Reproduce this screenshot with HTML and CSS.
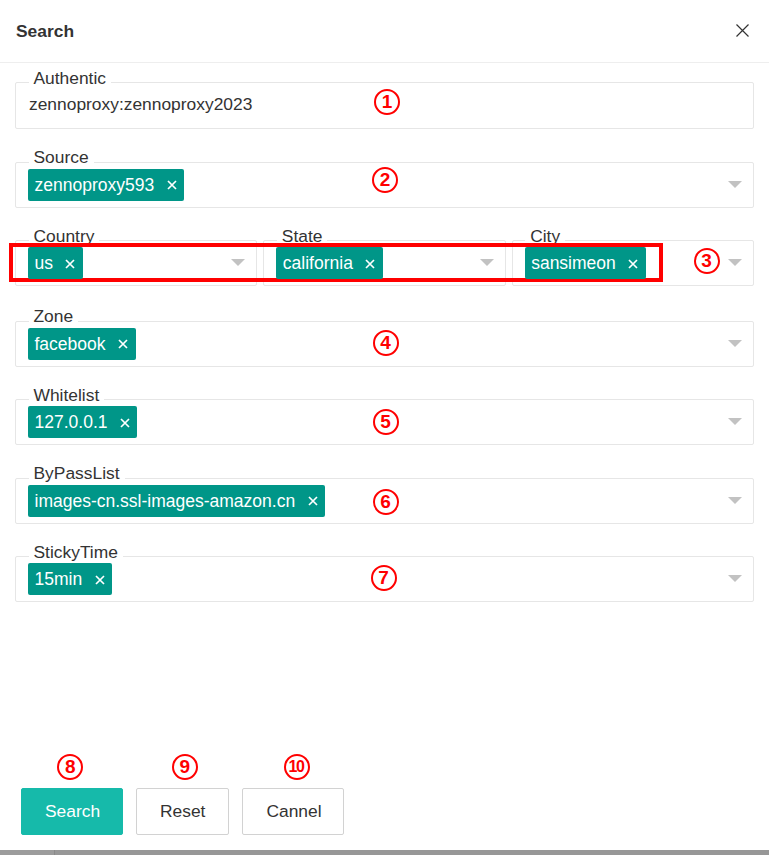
FILE: index.html
```html
<!DOCTYPE html>
<html lang="en">
<head>
<meta charset="utf-8">
<title>Search</title>
<link rel="stylesheet" href="styles.css">
</head>
<body>
<div class="dialog">
  <header class="dlg-head">
    <h2 class="dlg-title">Search</h2>
    <button class="dlg-close" type="button" aria-label="Close">
      <svg width="13" height="13" viewBox="0 0 13 13"><path d="M0.5 0.5L12.5 12.5M12.5 0.5L0.5 12.5" stroke="#333" stroke-width="1.2" fill="none"/></svg>
    </button>
  </header>

  <form class="dlg-body">
    <div class="field">
      <span class="field-label">Authentic</span>
      <div class="box box-input">zennoproxy:zennoproxy2023</div>
    </div>

    <div class="field">
      <span class="field-label">Source</span>
      <div class="box">
        <span class="tag">zennoproxy593<svg class="tag-x" viewBox="0 0 10 10"><path d="M1 1L9 9M9 1L1 9"/></svg></span>
        <i class="arrow"></i>
      </div>
    </div>

    <div class="row3">
      <div class="field">
        <span class="field-label">Country</span>
        <div class="box">
          <span class="tag">us<svg class="tag-x" viewBox="0 0 10 10"><path d="M1 1L9 9M9 1L1 9"/></svg></span>
          <i class="arrow"></i>
        </div>
      </div>
      <div class="field">
        <span class="field-label">State</span>
        <div class="box">
          <span class="tag">california<svg class="tag-x" viewBox="0 0 10 10"><path d="M1 1L9 9M9 1L1 9"/></svg></span>
          <i class="arrow"></i>
        </div>
      </div>
      <div class="field">
        <span class="field-label">City</span>
        <div class="box">
          <span class="tag">sansimeon<svg class="tag-x" viewBox="0 0 10 10"><path d="M1 1L9 9M9 1L1 9"/></svg></span>
          <i class="arrow"></i>
        </div>
      </div>
    </div>

    <div class="field">
      <span class="field-label">Zone</span>
      <div class="box">
        <span class="tag">facebook<svg class="tag-x" viewBox="0 0 10 10"><path d="M1 1L9 9M9 1L1 9"/></svg></span>
        <i class="arrow"></i>
      </div>
    </div>

    <div class="field">
      <span class="field-label">Whitelist</span>
      <div class="box">
        <span class="tag">127.0.0.1<svg class="tag-x" viewBox="0 0 10 10"><path d="M1 1L9 9M9 1L1 9"/></svg></span>
        <i class="arrow"></i>
      </div>
    </div>

    <div class="field">
      <span class="field-label">ByPassList</span>
      <div class="box">
        <span class="tag">images-cn.ssl-images-amazon.cn<svg class="tag-x" viewBox="0 0 10 10"><path d="M1 1L9 9M9 1L1 9"/></svg></span>
        <i class="arrow"></i>
      </div>
    </div>

    <div class="field">
      <span class="field-label">StickyTime</span>
      <div class="box">
        <span class="tag">15min<svg class="tag-x" viewBox="0 0 10 10"><path d="M1 1L9 9M9 1L1 9"/></svg></span>
        <i class="arrow"></i>
      </div>
    </div>
  </form>

  <footer class="dlg-foot">
    <button class="btn btn-primary" type="button">Search</button>
    <button class="btn" type="button">Reset</button>
    <button class="btn" type="button">Cannel</button>
  </footer>

  <div class="red-box"></div>
  <span class="mark m1">1</span>
  <span class="mark m2">2</span>
  <span class="mark m3">3</span>
  <span class="mark m4">4</span>
  <span class="mark m5">5</span>
  <span class="mark m6">6</span>
  <span class="mark m7">7</span>
  <span class="mark m8">8</span>
  <span class="mark m9">9</span>
  <span class="mark m10">10</span>
</div>
<div class="taskbar"><span class="taskbar-item"></span></div>
</body>
</html>
```

FILE: styles.css
```css
* { box-sizing: border-box; }

html, body {
  margin: 0;
  padding: 0;
  background: #fff;
}

body {
  font-family: "Liberation Sans", Arial, sans-serif;
  font-size: 17.4px;
  color: #333;
  width: 769px;
  height: 855px;
  overflow: hidden;
}

.dialog {
  position: relative;
  height: 850px;
  display: flex;
  flex-direction: column;
  background: #fff;
}

.dlg-head {
  height: 63px;
  border-bottom: 1px solid #eee;
  display: flex;
  align-items: center;
  padding: 0 20px 0 16px;
  flex: none;
}

.dlg-title {
  margin: 0;
  font-size: 17.4px;
  font-weight: bold;
  color: #333;
  line-height: 20px;
  flex: 1;
  padding-bottom: 1px;
}

.dlg-close {
  border: 0;
  background: none;
  padding: 0;
  width: 13px;
  height: 13px;
  display: block;
  margin-bottom: 2px;
}
.dlg-close svg { display: block; }

.dlg-body {
  margin: 0;
  padding: 4.5px 15px 0 15px;
  display: flex;
  flex-direction: column;
  gap: 18px;
}

.field {
  display: flex;
  flex-direction: column;
  min-width: 0;
}

.field-label {
  align-self: flex-start;
  position: relative;
  z-index: 1;
  margin-left: 13.5px;
  margin-bottom: -5.5px;
  padding: 0 5px;
  line-height: 20px;
  height: 20px;
  background: #fff;
  color: #333;
  white-space: nowrap;
}

.box {
  height: 46px;
  border: 1px solid #e6e6e6;
  border-radius: 2px;
  background: #fff;
  display: flex;
  align-items: center;
  padding: 0 11px 0 12px;
}

.box-input {
  height: 47px;
  padding-left: 13px;
  color: #333;
  padding-bottom: 2px;
}

.row3 {
  display: grid;
  grid-template-columns: 1fr 1fr 1fr;
  gap: 6px;
  margin-bottom: 2px;
}

.tag {
  position: relative;
  z-index: 3;
  display: inline-flex;
  align-items: center;
  gap: 12.5px;
  height: 32px;
  padding: 0 7.5px 0 6.5px;
  background: #009688;
  color: #fff;
  border-radius: 2px;
  white-space: nowrap;
  line-height: 32px;
  font-size: 17.5px;
}

.tag-x {
  width: 10px;
  height: 10px;
  flex: none;
  margin-top: 1px;
}
.tag-x path {
  stroke: #fff;
  stroke-width: 1.7;
  fill: none;
}

.arrow {
  margin-left: auto;
  width: 0;
  height: 0;
  border-top: 7px solid #c2c2c2;
  border-left: 7px solid transparent;
  border-right: 7px solid transparent;
  margin-top: -1px;
}

.dlg-foot {
  margin-top: auto;
  padding: 0 0 15px 21px;
  display: flex;
  gap: 13px;
}

.btn {
  height: 47px;
  padding: 0 23px;
  border: 1px solid #d2d2d2;
  border-radius: 2px;
  background: #fff;
  color: #333;
  font-family: "Liberation Sans", Arial, sans-serif;
  font-size: 17.4px;
  line-height: 45px;
  min-width: 93px;
}

.btn-primary {
  border-color: #16baaa;
  background: #16baaa;
  color: #fff;
  width: 102px;
}

.btn:last-child { width: 102px; }

/* annotation overlays */
.red-box {
  position: absolute;
  z-index: 2;
  left: 9px;
  top: 243px;
  width: 654px;
  height: 39px;
  border: 4px solid #f00;
  pointer-events: none;
}

.mark {
  position: absolute;
  z-index: 4;
  width: 26px;
  height: 26px;
  border: 2.3px solid #f00;
  border-radius: 50%;
  color: #f00;
  font-family: "Liberation Sans", Arial, sans-serif;
  font-weight: bold;
  font-size: 19px;
  line-height: 22px;
  text-align: center;
}
.m1 { left: 374px; top: 89px; }
.m2 { left: 372px; top: 167px; }
.m3 { left: 693.5px; top: 248px; }
.m4 { left: 372.5px; top: 330px; }
.m5 { left: 372.5px; top: 408.5px; }
.m6 { left: 372.5px; top: 488.5px; }
.m7 { left: 370.5px; top: 565px; }
.m8 { left: 57.3px; top: 754px; }
.m9 { left: 171.7px; top: 754px; }
.m10 { left: 283.7px; top: 754px; font-size: 16px; letter-spacing: -1.5px; text-indent: -1.5px; }

.taskbar {
  height: 5px;
  background: #979797;
  display: flex;
}
.taskbar-item {
  width: 55px;
  height: 5px;
  background: #9c9c9c;
  border-right: 1px solid #8a8a8a;
}
```
